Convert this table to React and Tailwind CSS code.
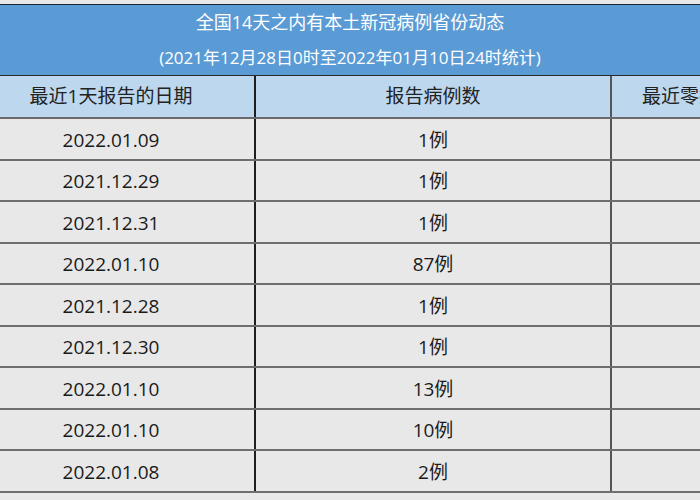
import React from "react";

const rows = [
  { date: "2022.01.09", count: "1例" },
  { date: "2021.12.29", count: "1例" },
  { date: "2021.12.31", count: "1例" },
  { date: "2022.01.10", count: "87例" },
  { date: "2021.12.28", count: "1例" },
  { date: "2021.12.30", count: "1例" },
  { date: "2022.01.10", count: "13例" },
  { date: "2022.01.10", count: "10例" },
  { date: "2022.01.08", count: "2例" },
];

export default function App() {
  return (
    <div
      className="w-[700px] h-[500px] overflow-hidden bg-[#e8e8e8] pt-1"
      style={{ fontFamily: '"Open Sans", "Noto Sans CJK SC", sans-serif' }}
    >
      {/* 标题 */}
      <div className="border-t border-[#1d2733] bg-[#5b9bd5] text-white text-center h-[71px] flex flex-col justify-center">
        <div className="leading-[35px] text-[18px]">全国14天之内有本土新冠病例省份动态</div>
        <div className="leading-[35px] text-[17px]">(2021年12月28日0时至2022年01月10日24时统计)</div>
      </div>

      {/* 表格 */}
      <div className="-ml-8 w-[900px] text-[19px]">
        <div className="grid grid-cols-[288px_356px_256px] h-[44px] bg-[#bdd7ee] border-t border-[#2a2a2a] border-b-2 border-b-[#6a6a6a] text-[#222]">
          <div className="flex items-center justify-center border-r-2 border-[#1e1e1e]">最近1天报告的日期</div>
          <div className="flex items-center justify-center border-r-2 border-[#555]">报告病例数</div>
          <div className="flex items-center pl-[30px]">最近零报告的日期</div>
        </div>
        {rows.map((r, i) => (
          <div
            key={i}
            className="grid grid-cols-[288px_356px_256px] h-[41.5px] border-b-2 border-[#6e6e6e] text-[#1a1a1a]"
          >
            <div className="flex items-center justify-center pt-[2px] border-r-2 border-[#1e1e1e]">{r.date}</div>
            <div className="flex items-center justify-center pt-[2px] border-r-2 border-[#555]">{r.count}</div>
            <div />
          </div>
        ))}
      </div>
    </div>
  );
}
